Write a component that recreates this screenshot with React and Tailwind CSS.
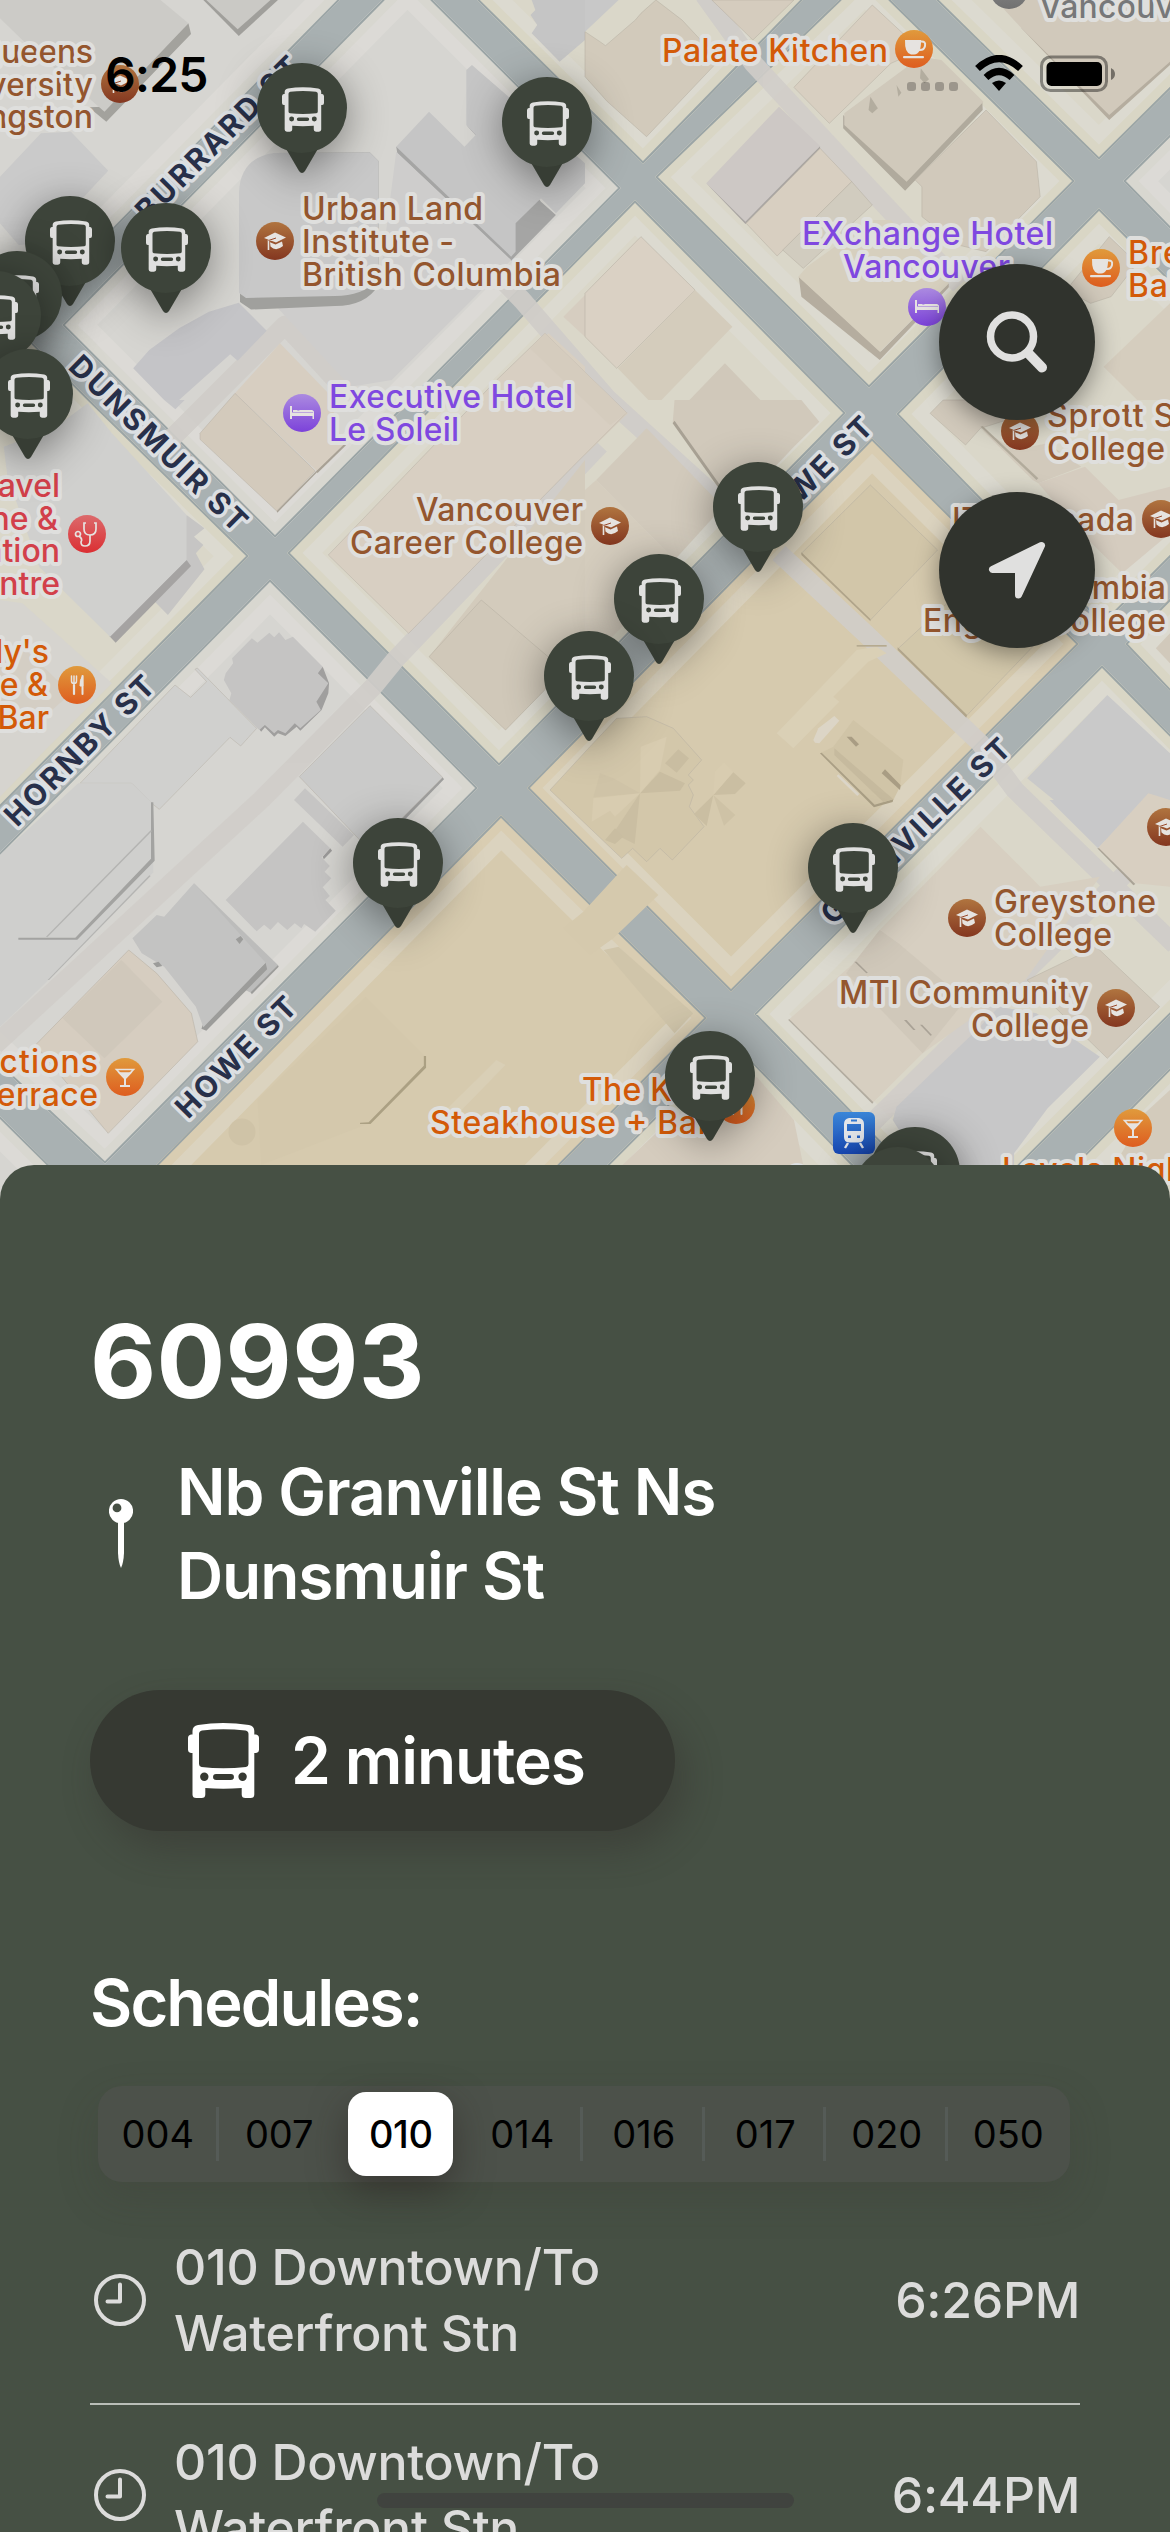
import React from "react";

const FONT = 'Inter, "Liberation Sans", sans-serif';

/* ---------- map data ---------- */

const GREY = { fill: "#d6d5d1", path: "#dcdad6", rim: "#d8d7d0" };
const CREAM = { fill: "#dad7c9", path: "#dcdad0", rim: "#d9d6c5" };
const TAN = { fill: "#d6caae", path: "#dbd3bf", rim: "#d9cdb2" };

const BLOCKS = [
  ["-60,-60 400,-60 340,0 0,345 -60,405", GREY],
  ["62,325 382,0 442,-60 373,-60 433,0 621,188 275,538", GREY],
  ["417,-60 477,0 643,164 803,0 863,-60", CREAM],
  ["655,177 839,0 865,-26 891,0 1075,181 869,388", CREAM],
  ["936,0 876,-60 1240,-60 1240,20 1099,160", CREAM],
  ["1123,181 1240,65 1240,300", GREY],
  ["287,553 635,200 846,413 499,766", CREAM],
  ["1099,208 1240,350 1240,487 1115,613 1091,613 896,414", CREAM],
  ["-60,250 90,400 249,556 -60,868", CREAM],
  ["270,579 478,788 105,1164 -60,1010 -60,913", GREY],
  ["527,788 872,438 1079,644 731,992", TAN],
  ["501,815 707,1018 500,1225 97,1225", TAN],
  ["754,1014 1102,665 1240,805 1240,945 960,1225", CREAM],
  ["1125,644 1240,528 1240,765", CREAM],
  ["-60,1057 110,1225 -60,1225", GREY],
  ["732,1040 912,1225 547,1225", CREAM],
  ["1240,997 1015,1225 1240,1225", CREAM],
];

const ALLEYS = [
  "455,232 522,300 607,398 716,497",
  "704,-5 753,63 868,187 960,285",
  "600,445 395,660 373,687 261,800 -5,1045",
  "165,445 285,325 345,390",
  "779,553 868,636 980,743 1015,790 1175,945",
  "1126,873 870,1125",
];

/* Footprints grouped by map tile; sx and sy convert tile units to pixels. */
const SX = 0.37309;
const SY = 0.33333;
const TILES = [
  {
    x: 0, y: 0, sx: SX, sy: SY,
    shapes: [
      ["505,70 512,102 285,365 238,322 280,320", "#a3a29d"],
      ["0,55 0,0 430,0 505,70 280,335 60,120", "#cccbc7"],
      ["545,0 640,108 745,0", "#a09f9b"],
      ["553,0 637,88 725,0", "#cac9c5"],
      ["0,530 110,400 190,395 290,512 150,680 130,730 50,735 0,670", "#cacaca"],
      ["1062,440 1065,460 1370,782 1490,645 1450,605 1440,590", "#a5a5a4"],
      ["1250,375 1280,412 1275,400", "#9c9c9b"],
      ["1062,440 1150,335 1245,440 1275,405 1250,375 1250,210 1265,195 1568,490 1568,550 1490,640 1450,595 1382,670 1382,755 1370,770", "#c5c5c5"],
      ["745,925 1015,870 1062,455 1370,780 1260,905 1050,1140 940,1160", "#cecdcc"],
      ["357,1105 400,1050 480,985 560,935 640,908 715,992 637,1082 617,1063 480,1200 440,1200", "#c4c4c7"],
      ["1425,0 1568,0 1568,120 1500,185 1425,100 1440,75 1422,45 1435,30", "#c5c5c5"],
      ["1470,1000 1568,1100 1568,1200 1290,1200", "#d8cfc1"],
      ["1510,950 1568,885 1568,1010", "#d6cdc0"],
    ],
  },
  {
    x: 585, y: 0, sx: SX, sy: SY,
    shapes: [
      ["0,95 40,125 55,137 135,60 150,40 190,0 260,60 360,180 165,410 65,310 60,305 0,230", "#d2cabb", 1],
      ["340,0 560,0 450,120", "#d5ccbe", 1],
      ["0,0 90,0 0,95", "#c8c8c8"],
      ["770,15 900,150 820,190 655,370 560,262", "#d8cfc1", 1],
      ["692,345 865,540 1065,305 1066,330 858,572 692,385", "#b0aa9d"],
      ["900,170 955,180 1068,305 862,545 695,375 695,340", "#d0c9bb"],
      ["765,290 785,325 770,340 760,330", "#b3ad9f"],
      ["835,255 848,278 840,290", "#b3ad9f"],
      ["900,205 922,238 910,250 898,235", "#b3ad9f"],
      ["1075,330 1210,485 1220,590 1075,755 1000,735 903,650 903,560 885,540", "#d1c9bb", 1],
      ["325,550 430,672 630,450 630,438 430,655", "#a9a5a2"],
      ["520,320 630,438 430,665 325,550", "#cdc8c5"],
      ["630,445 715,545 515,768 432,670", "#d8cfc1", 1],
      ["715,545 770,615 585,805 530,750", "#d1ccbf", 1],
      ["573,830 792,1055 975,850 975,862 790,1080 580,890", "#b5ad9f"],
      ["595,800 770,660 820,660 975,850 790,1055 572,830", "#d6cfbe"],
      ["1170,85 1405,360 1568,195 1568,180 1410,330 1180,70", "#b5ad9f"],
      ["1100,0 1568,0 1568,185 1405,345 1170,85", "#d1c9bb"],
      ["150,710 295,870 85,1105 0,1010 0,880", "#dad1c4", 1],
      ["295,870 395,980 205,1200 170,1200 88,1105", "#d4ccbc"],
      ["375,1090 470,1200 280,1200", "#d0c8ba"],
      ["1290,870 1405,710 1480,790 1410,890 1355,910", "#d1c9bb", 1],
      ["1390,1100 1568,910 1568,1200 1480,1200", "#d5cdbe"],
    ],
  },
  {
    x: 0, y: 400, sx: SX, sy: SY,
    shapes: [
      ["440,0 495,0 470,28", "#c6c6c8"],
      ["1568,180 1568,780 1460,870 1355,990 1150,770", "#d3cbbc"],
      ["1150,770 1290,600 1490,790 1460,870 1355,990", "#d0c8b9", 1],
      ["500,345 548,385 520,410 545,435 525,460 548,508 450,645 415,605", "#c6c5c4"],
      ["500,480 512,498 310,728 293,708", "#a5a3a2"],
      ["10,140 150,80 235,10 300,100 500,345 500,480 295,710 105,500 20,230", "#d0d0ce"],
      ["0,600 60,610 300,850 130,1040 0,1190", "#d6d4cf"],
      ["0,790 60,740 190,880 110,960 0,1000", "#d4cec4"],
      ["865,800 882,850 880,880 862,930 805,992 795,980 765,1008 745,1000 735,1010 710,982 700,995 690,980", "#a09f9e"],
      ["605,820 625,790 622,775 675,715 690,728 722,698 735,712 748,697 765,720 785,710 865,800 852,820 880,850 848,905 860,930 805,985 790,970 765,1000 745,990 735,1000 710,975 695,990 615,900 620,880 600,840", "#c5c4c3"],
    ],
  },
  {
    x: 585, y: 400, sx: SX, sy: SY,
    shapes: [
      ["0,0 115,40 0,165", "#d6cdbf"],
      ["235,70 240,0 580,0 628,65 560,140 400,330", "#d1c9bb"],
      ["235,70 400,330 404,322 240,62", "#a8a194"],
      ["30,240 165,85 370,320 240,480", "#d2cabc"],
      ["0,270 30,240 240,480 100,680 0,790", "#d5cdbe"],
      ["765,255 945,450 765,660 580,460", "#d2c6a9", 1],
      ["580,457 765,657 765,664 580,465", "#b0a48a"],
      ["840,745 980,600 1200,740 1022,948", "#d2c7aa", 1],
      ["838,742 1024,945 1022,953 838,750", "#b0a48a"],
      ["1185,1135 1400,885 1568,1060 1568,1320 1400,1330", "#c9c9c9"],
      ["925,40 960,0 1130,0 1130,60 1060,85 1020,135", "#d1c9bb", 1],
      ["1060,85 1150,150 1240,130 1330,200 1215,250 1200,240", "#d2cabc"],
      ["1215,250 1340,200 1430,300 1568,260 1568,400 1440,520 1330,400", "#d5ccbf"],
      ["1060,80 1066,78 1215,235 1210,240", "#b2ab9c"],
      ["1530,745 1568,700 1568,790", "#d1c9bb"],
    ],
  },
  {
    x: 0, y: 800, sx: SX, sy: SY,
    shapes: [
      ["885,145 865,170 868,178 890,152", "#9b9a99"],
      ["605,300 812,65 885,145 862,172 884,198 870,215 888,235 865,262 884,288 872,300 900,332 845,395 815,372 808,385 790,370 770,390 745,366 725,390 708,374 688,394", "#c5c4c3"],
      ["520,250 745,495 675,580 640,560", "#bcbcbb"],
      ["745,495 747,500 675,583 672,577", "#9c9c9a"],
      ["712,488 716,508 553,692 540,686 545,670", "#9c9c9a"],
      ["355,415 420,345 440,350 520,250 712,488 545,682 525,620 440,500 380,460", "#c3c3c2"],
      ["632,418 645,408 652,418 642,432", "#9c9c9a"],
      ["410,490 425,485 435,498 420,502", "#9c9c9a"],
      ["95,735 165,655 345,450 420,520 513,640 530,725 290,1000", "#d6cdc0", 1],
      ["325,480 435,605 280,775 168,655", "#d0c8bb"],
      ["980,590 1140,770 1140,800 990,970 700,1095 690,900", "#d4c8ac"],
      ["1136,768 1142,768 1142,803 993,972 965,972 965,968 988,967 1136,797", "#aba083"],
      ["1200,925 1330,780 1355,795 1220,950", "#d9cfb6"],
    ],
  },
  {
    x: 585, y: 800, sx: SX, sy: SY,
    shapes: [
      ["50,450 90,440 290,640 240,700", "#d0c5aa"],
      ["545,660 720,490 790,390 1060,80 1220,260 1380,230 1180,540 905,760 770,910", "#d7cfc1"],
      ["545,660 547,657 773,907 770,911", "#b2aca0"],
      ["790,390 720,490 700,520 905,760 1020,600 840,430", "#d0c8ba"],
      ["722,485 728,485 758,518 754,520", "#a9a296"],
      ["855,660 862,660 886,690 880,690", "#a9a296"],
      ["898,674 904,674 930,705 926,707", "#a9a296"],
      ["825,960 835,920 1050,690 1110,620 1210,640 1380,770 1240,925 1150,1060 1150,1095 900,1095", "#c7c7c8"],
      ["1245,0 1500,0 1375,145", "#c8c8c9"],
      ["1375,145 1510,-20 1568,0 1568,260 1475,250", "#d8cfc1"],
      ["1373,145 1378,145 1475,252 1470,256", "#aaa396"],
      ["1185,540 1370,440 1540,620 1400,775", "#d1c9bb", 1],
      ["190,1000 460,830 560,960 585,1095 100,1095", "#d5ccbe"],
      ["1500,940 1568,870 1568,1095 1420,1095", "#d3cbbc"],
    ],
  },
  {
    x: 0, y: 640, sx: SY, sy: SY,
    shapes: [
      ["525,135 572,172 620,125 585,88 592,84 770,265 722,318 690,292 478,508 455,490 395,430 240,430", "#d0d0ce", 1],
      ["235,430 395,430 457,490 460,697 145,1020 55,1108 0,1160 0,645", "#cfcfcd"],
      ["453,487 460,487 464,662 232,899 55,899 55,893 226,893 453,656", "#a3a3a1"],
      ["452,571 456,573 142,892 138,890", "#b4b4b2"],
      ["448,706 452,708 147,1020 143,1020", "#b4b4b2"],
      ["1328,412 1332,418 1120,636 1110,628", "#9e9e9d"],
      ["898,410 1110,197 1328,412 1110,632", "#cacac9", 1],
      ["915,445 1062,585 1028,620 882,480", "#c6c5c4"],
    ],
  },
  {
    x: 500, y: 640, sx: SY, sy: SY,
    shapes: [
      ["190,865 250,815 345,712 380,675 475,765 340,895 270,945", "#d5c9ad"],
      ["150,450 270,320 350,235 440,230 520,265 605,360 565,405 580,420 565,435 580,465 568,500 612,560 517,660 480,625 440,665 398,625 365,655 215,512", "#d3c7aa", 1],
      ["420,460 480,395 555,430 540,452", "#c9bda1"],
      ["420,460 404,612 340,580", "#cabea2"],
      ["420,460 280,472 300,400 340,415", "#cfc3a7"],
      ["420,460 422,320 500,290 480,390", "#d8ccb0"],
      ["420,460 280,475 275,545 330,512 345,530", "#d8ccb0"],
      ["495,370 535,328 567,355 530,398", "#c9bda1"],
      ["315,600 345,565 370,590 345,612", "#c9bda1"],
      ["640,465 700,397 737,430 705,462", "#cabea2"],
      ["640,465 582,522 620,558", "#cabea2"],
      ["640,465 672,557 706,525", "#cec2a6"],
      ["640,465 645,395 672,367 700,395", "#d8ccb0"],
      ["1070,30 1130,20 1160,40 1105,65 1000,170 1018,185 880,325 830,280", "#dad0b6"],
      ["1070,15 1160,15 1160,20 1070,20", "#b5aa8f"],
      ["940,300 955,265 1003,228 1018,242 958,310 945,308", "#dcd5c6"],
      ["960,340 1000,320 1060,240 1210,360 1200,440 1180,480 1150,488 1120,500", "#d0c4a7"],
      ["960,340 965,338 1124,494 1180,478 1178,486 1122,502", "#aa9f85"],
      ["1003,325 1180,478 1150,486 1003,345", "#c6ba9e"],
      ["1040,290 1055,290 1077,313 1068,320", "#a99d84"],
      ["1145,400 1155,388 1202,436 1200,450", "#a99d84"],
      ["1015,403 1078,462 1072,468 1010,408", "#dbd5c8"],
    ],
  },
  {
    x: 200, y: 250, sx: SY, sy: SY,
    shapes: [
      ["350,660 430,580 438,586 352,670", "#a8a195"],
      ["240,280 385,430 430,585 350,662 105,430", "#d7cec1"],
      ["230,783 350,662 354,664 232,788", "#a8a195"],
      ["0,550 105,430 346,663 230,783 0,568", "#d3cabc", 1],
      ["1035,250 1280,488 1130,638 626,1150 385,915 890,390", "#d8cfc2", 1],
      ["1035,250 1280,488 1230,525 990,295", "#d5ccbe"],
    ],
  },
];

const STREETS = [
  ["BURRARD ST", 148, 223, -45, 218],
  ["DUNSMUIR ST", 67, 368, 44.6, 236],
  ["HORNBY ST", 17, 828, -45, 198],
  ["HOWE ST", 188, 1120, -45, 157],
  ["HOWE ST", 764, 540, -45, 157],
  ["GRANVILLE ST", 833, 926, -44.2, 251],
];

const BROWN = "#94562e";
const ORANGE = "#d35a08";
const PURPLE = "#7f48e0";
const RED = "#d2404a";

/* text, x, baseline, colour, anchor, width */
const LABELS = [
  ["Queens", 93, 63, BROWN, "end", 116],
  ["University", 93, 96, BROWN, "end", 156],
  ["Kingston", 93, 128, BROWN, "end", 135],
  ["Palate Kitchen", 662, 61.5, ORANGE, "start", 226],
  ["Vancouver", 1039, 18, "#777879", "start", 166],
  ["Urban Land", 302, 220, BROWN, "start", 181],
  ["Institute -", 302, 253, BROWN, "start", 152],
  ["British Columbia", 302, 286, BROWN, "start", 259],
  ["EXchange Hotel", 802, 245, PURPLE, "start", 251],
  ["Vancouver", 843, 278, PURPLE, "start", 167],
  ["Breka", 1128, 264, ORANGE, "start", 92],
  ["Bakery", 1128, 297, ORANGE, "start", 110],
  ["Executive Hotel", 329, 408, PURPLE, "start", 244],
  ["Le Soleil", 329, 441, PURPLE, "start", 130],
  ["Sprott Shaw", 1047, 427, BROWN, "start", 194],
  ["College", 1047, 459.5, BROWN, "start", 118],
  ["Travel", 60, 497, RED, "end"],
  ["Medicine &", 58, 529.5, RED, "end"],
  ["Vaccination", 60, 562, RED, "end"],
  ["Centre", 60, 595, RED, "end"],
  ["Vancouver", 416, 521, BROWN, "start", 167],
  ["Career College", 350, 554, BROWN, "start", 233],
  ["ITD Canada", 952, 531, BROWN, "start", 182],
  ["Columbia", 1166, 599, BROWN, "end", 144],
  ["English College", 923, 632, BROWN, "start", 243],
  ["Cody's", 49, 663, ORANGE, "end"],
  ["Lounge &", 48, 696, ORANGE, "end"],
  ["Bar", 49, 729, ORANGE, "end"],
  ["Greystone", 994, 913, BROWN, "start", 162],
  ["College", 994, 946, BROWN, "start", 118],
  ["MTI Community", 839, 1004, BROWN, "start", 250],
  ["College", 971, 1037, BROWN, "start", 118],
  ["Reflections", 98, 1073, ORANGE, "end", 182],
  ["Terrace", 98, 1106, ORANGE, "end", 120],
  ["The Keg", 582, 1101, ORANGE, "start", 128],
  ["Steakhouse + Bar", 430, 1134, ORANGE, "start", 280],
  ["Levels Nightclub", 1002, 1181, ORANGE, "start", 262],
];

const BADGES = [
  [120, 84, "cap"], [914, 49, "cup"], [1009, -10, "none"], [275, 241, "cap"],
  [927, 307, "bed"], [1101, 268, "cup"], [302, 413, "bed"], [1020, 431, "cap"],
  [610, 526, "cap"], [1161, 519, "cap"], [87, 534, "steth"], [77, 685, "fork"],
  [1166, 827, "cap"], [967, 918, "cap"], [1116, 1008, "cap"], [125, 1077, "glass"],
  [736, 1105, "fork"], [1133, 1128, "glass"],
];

const BADGE_FILL = { cap: "brownG", cup: "orangeG", fork: "orangeG", glass: "orangeG", bed: "purpleG", steth: "redG", none: "greyG" };

const PINS = [
  [302, 108], [547, 122], [70, 241], [166, 248], [16.5, 296], [-4.5, 316], [28, 394],
  [758, 507], [659, 599], [589, 676], [398, 863], [853, 868], [710, 1076], [915, 1172], [898, 1192],
];

/* ---------- icons ---------- */

function Bus({ className }) {
  return (
    <svg viewBox="0 0 71 75" className={className} fill="currentColor" fillRule="evenodd">
      <path d="M4.500 8Q4.500 3 10 2Q35 -2 61 2Q66.300 3 66.300 8V11.500H68Q71 12 71 15V26.500Q71 29.500 68 30H66.300V71.500Q66.300 75 62.500 75H57.500Q53.700 75 53.700 71.500V65Q35 66.500 17.300 65V71.500Q17.300 75 13.500 75H8.300Q4.500 75 4.500 71.500V30H3Q0 29.500 0 26.500V15Q0 12 3 11.500H4.500ZM14 7.500Q35 5 57.500 7.500Q60.500 8 60.500 11V41Q60.500 43.500 58 44Q35 46.500 13.500 44Q11 43.500 11 41V11Q11 8 14 7.500ZM16.300 49.500A4.200 4.200 0 1 0 16.300 57.900A4.200 4.200 0 1 0 16.300 49.500ZM54.600 49.500A4.200 4.200 0 1 0 54.600 57.900A4.200 4.200 0 1 0 54.600 49.500ZM28 51H43A2.900 2.900 0 0 1 43 56.900H28A2.900 2.900 0 0 1 28 51Z" />
    </svg>
  );
}

function Glyph({ kind }) {
  const c = "#e6e3e0";
  if (kind === "cap")
    return (
      <g fill={c}>
        <path d="M0 -8.500L11 -3.500L1 1.500L-11 -3Z" />
        <path d="M-5 1.200L0.500 3.500L7 0.500L8 5Q1 11 -4.500 5.500Z" />
        <path d="M1 -3L-6.500 -0.500V9" fill="none" stroke={c} strokeWidth="1.600" />
        <path d="M1 -3L-6.500 -0.500" fill="none" stroke="#99492a" strokeWidth="1" />
      </g>
    );
  if (kind === "cup")
    return (
      <g fill={c}>
        <path d="M-9 -9H7Q7.500 5 0 5.500H-3Q-9.500 4 -9 -9Z" />
        <path d="M7 -7.500Q12 -8 11 -3Q10 1.500 5 1" fill="none" stroke={c} strokeWidth="2" />
        <rect x="-11" y="7" width="21" height="2.200" rx="1" />
      </g>
    );
  if (kind === "bed")
    return (
      <g fill={c}>
        <rect x="-12" y="-7" width="2" height="13" />
        <path d="M-9 -2.500H11Q12 -2 12 0V6H10.500V3H-10V-0.500H11V-1H-9Z" />
        <path d="M-9 -3L-5 -3L-4 -1.500L-2 -3H10L12 -1H-9Z" />
      </g>
    );
  if (kind === "fork")
    return (
      <g stroke={c} strokeLinecap="round" fill={c}>
        <path d="M-5.500 -9V-4Q-5.500 -1.500 -3 -1.500Q-0.500 -1.500 -0.500 -4V-9M-3 -9V-2" fill="none" strokeWidth="1.500" />
        <path d="M-3 0V9" strokeWidth="2.200" />
        <path d="M5.500 -9V9" strokeWidth="2" />
        <path d="M5.500 -9Q2.500 -5 3 1H5.500Z" strokeWidth="1" />
      </g>
    );
  if (kind === "glass")
    return (
      <g stroke={c} fill="none" strokeWidth="1.600">
        <path d="M-8.500 -7.500H8.500L0 1.500Z" />
        <path d="M-5.500 -4H5.500L0 1.500Z" fill={c} />
        <path d="M0 1V9M-5 9H5" strokeWidth="2" />
      </g>
    );
  if (kind === "steth")
    return (
      <g stroke={c} fill="none" strokeWidth="1.700">
        <path d="M-1 -11H-3V-5Q-3 1 3 1Q9 1 9 -5V-11H7" />
        <path d="M3 1V7Q3 12 -2 12Q-6 12 -6 8Q-4 5 -8 2" />
        <circle cx="-9" cy="0" r="2.500" />
      </g>
    );
  return null;
}

function Grad({ id, a, b }) {
  return (
    <linearGradient id={id} x1="0" y1="0" x2="0" y2="1">
      <stop offset="0" stopColor={a} />
      <stop offset="1" stopColor={b} />
    </linearGradient>
  );
}

function MapCanvas() {
  return (
    <svg className="block h-[1226px] w-[1170px]" viewBox="0 0 1170 1226" style={{ fontFamily: FONT }}>
      <defs>
        <Grad id="brownG" a="#b0743f" b="#843720" />
        <Grad id="orangeG" a="#e09a3c" b="#de5d1f" />
        <Grad id="purpleG" a="#ab8ae0" b="#7c42da" />
        <Grad id="redG" a="#dc6a6c" b="#db2f33" />
        <Grad id="greyG" a="#909090" b="#707070" />
        <Grad id="blueG" a="#3b86d8" b="#1747b4" />
        {BLOCKS.map((b, i) => (
          <clipPath key={i} id={`block-${i}`}>
            <polygon points={b[0]} />
          </clipPath>
        ))}
      </defs>
      <rect width="1170" height="1226" fill="#a9b1b2" />
      {BLOCKS.map(([pts, c], i) => (
        <g key={i} clipPath={`url(#block-${i})`} strokeLinejoin="round">
          <polygon points={pts} fill={c.fill} stroke={c.path} strokeWidth="50" />
          <polygon points={pts} fill="none" stroke={c.rim} strokeWidth="22" />
          <polygon points={pts} fill="none" stroke="#9ba5a6" strokeWidth="4" />
        </g>
      ))}
      <g fill="none" stroke="#d0cdc9" strokeWidth="19" strokeLinejoin="round" opacity="0.9">
        {ALLEYS.map((a) => (
          <polyline key={a} points={a} />
        ))}
      </g>
      {TILES.map((t) => (
        <g key={`${t.x}-${t.y}`} transform={`translate(${t.x} ${t.y}) scale(${t.sx} ${t.sy})`}>
          {t.shapes.map(([pts, fill, edge], i) => (
            <polygon key={i} points={pts} fill={fill} stroke={edge ? "#b2aca0" : "none"} strokeWidth={edge ? 1.8 : 0} strokeOpacity="0.75" />
          ))}
        </g>
      ))}
      <path d="M274 153L370 152.500L378.500 161V285Q366 306 335 306L251 309.500L240 302V293L246 297Z" fill="#a0a09d" />
      <path d="M274 153L370 152.500L378.500 161V280Q362 296 335 296L246 298L239 293V193Q240 158 274 153Z" fill="#c8c8c8" />
      <circle cx="242" cy="1132" r="13.500" fill="#cfc3a7" />

      {STREETS.map(([t, x, y, r, w], i) => (
        <text key={i} transform={`translate(${x} ${y}) rotate(${r})`} textLength={w} fontSize="30" fontWeight="700" fill="#28304a" stroke="#dcdfe2" strokeWidth="7" strokeLinejoin="round" paintOrder="stroke">
          {t}
        </text>
      ))}
      {BADGES.map(([x, y, k], i) => (
        <g key={i} transform={`translate(${x} ${y})`}>
          <circle r="19" fill={`url(#${BADGE_FILL[k]})`} />
          <Glyph kind={k} />
        </g>
      ))}
      {LABELS.map(([t, x, y, c, anchor, w], i) => (
        <text key={i} x={x} y={y} textAnchor={anchor} textLength={w} fontSize="32" fontWeight="550" fill={c} stroke="#dfdfdd" strokeWidth="8" strokeLinejoin="round" paintOrder="stroke">
          {t}
        </text>
      ))}
      <g transform="translate(833 1112)">
        <rect width="42" height="42" rx="6" fill="url(#blueG)" />
        <path fillRule="evenodd" fill="#e4e6ea" d="M16 6H26Q31 7 31 12V25Q31 30 26 30.500H16Q11 30 11 25V12Q11 7 16 6ZM18 7.500H24V9.500H18ZM14 12H28V19H14ZM15 23.500H18V26H15ZM24 23.500H27V26H24Z" />
        <path d="M15 31L12 36M27 31L30 36" stroke="#e4e6ea" strokeWidth="2.400" />
      </g>
      <circle cx="797" cy="1176" r="13" fill="#dcdfe2" />
      <circle cx="797" cy="1176" r="9" fill="#8fa4cf" />
    </svg>
  );
}

function Pin({ x, y }) {
  return (
    <div className="absolute h-[110px] w-[90px] drop-shadow-[0_8px_20px_rgba(0,0,0,0.42)]" style={{ left: x - 45, top: y - 45 }}>
      <svg viewBox="0 0 90 110" className="absolute inset-0 h-full w-full">
        <path d="M28 84H62L48 108Q45 112 42 108Z" fill="#373d34" />
        <circle cx="45" cy="45" r="45" fill="#3d443a" />
      </svg>
      <Bus className="absolute left-[25px] top-[24px] h-[45px] w-[42px] text-[#e0e0df]" />
    </div>
  );
}

function RoundButton({ children }) {
  return (
    <button className="flex size-[156px] items-center justify-center rounded-full bg-[#30332d] shadow-[0_6px_24px_rgba(0,0,0,0.4)]">
      {children}
    </button>
  );
}

function StatusBar() {
  return (
    <div className="absolute inset-x-0 top-0 flex h-[141px] items-start justify-between pl-[105px] pr-[54px] text-black">
      <div className="pt-[47px] text-[48px] font-semibold leading-[56px] tracking-[-0.9px]">6:25</div>
      <div className="flex pt-[55px]">
        <div className="mr-[17px] mt-[27px] flex gap-[5px]">
          {[0, 1, 2, 3].map((i) => (
            <span key={i} className="size-[9px] rounded-[3px] bg-black/25" />
          ))}
        </div>
        <svg viewBox="0 0 48 36" className="h-[36px] w-[48px]">
          <g fill="none" stroke="#000" strokeWidth="7">
            <path d="M2.500 13.500Q24 -6.500 45.500 13.500" />
            <path d="M11 22.500Q24 10.500 37 22.500" />
          </g>
          <path d="M17 28Q24 23 31 28L24 36Z" />
        </svg>
        <svg viewBox="0 0 76 38" className="ml-[17px] h-[38px] w-[76px]">
          <rect x="1.500" y="2" width="65" height="33.500" rx="9" fill="none" stroke="#000" strokeOpacity="0.4" strokeWidth="3" />
          <rect x="6.500" y="7" width="55.500" height="24" rx="5" />
          <path d="M71 13Q75 15 75 19Q75 23 71 25Z" fillOpacity="0.45" />
        </svg>
      </div>
    </div>
  );
}

const ROUTES = ["004", "007", "010", "014", "016", "017", "020", "050"];
const SELECTED = 2;

function Segments() {
  return (
    <div className="ml-[8px] grid h-[96px] w-[972px] grid-cols-8 rounded-[24px] bg-[#4c514a] shadow-[0_16px_40px_rgba(60,55,50,0.22)]">
      {ROUTES.map((r, i) => (
        <div key={r} className="relative flex items-center justify-center pr-[2px]">
          {i === SELECTED ? (
            <span className="flex h-[84px] w-[105px] items-center justify-center rounded-[18px] bg-white text-[38px] font-medium tracking-[-0.4px] text-black shadow-[0_14px_36px_rgba(40,32,30,0.5)]">{r}</span>
          ) : (
            <span className="text-[38px] text-black">{r}</span>
          )}
          {i !== SELECTED && i !== SELECTED - 1 && i < ROUTES.length - 1 && (
            <span className="absolute right-px top-[21px] h-[54px] w-[3px] bg-[#555b57]" />
          )}
        </div>
      ))}
    </div>
  );
}

function Departure({ time }) {
  return (
    <div className="flex h-[193px] items-center text-[50px] font-[550] leading-[66px] text-[#dcdcdb]">
      <svg viewBox="0 0 52 52" className="ml-[4px] size-[52px] shrink-0" fill="none" stroke="currentColor" strokeWidth="4" strokeLinecap="round">
        <circle cx="26" cy="26" r="24" />
        <path d="M26 10.500V27.500H13.500" strokeLinejoin="round" />
      </svg>
      <div className="ml-[28px] w-[460px] whitespace-nowrap tracking-[-0.3px]">
        010 Downtown/To
        <br />
        Waterfront Stn
      </div>
      <div className="ml-auto whitespace-nowrap tracking-[-0.3px]">{time}</div>
    </div>
  );
}

export default function App() {
  return (
    <div className="relative h-[2532px] w-[1170px] overflow-hidden bg-[#465044]" style={{ fontFamily: FONT }}>
      <div className="relative h-[1226px] overflow-hidden">
        <MapCanvas />
        {PINS.map(([x, y]) => (
          <Pin key={`${x},${y}`} x={x} y={y} />
        ))}
        <div className="absolute left-[939px] top-[264px] flex flex-col gap-[72px]">
          <RoundButton>
            <svg viewBox="0 0 64 64" className="size-[64px]" fill="none" stroke="#e0e0df" strokeLinecap="round">
              <circle cx="27" cy="26.500" r="21.500" strokeWidth="7.500" />
              <path d="M43 43L57 57.500" strokeWidth="10" />
            </svg>
          </RoundButton>
          <RoundButton>
            <svg viewBox="0 0 64 64" className="size-[64px]" fill="#e0e0df" stroke="#e0e0df" strokeWidth="7" strokeLinejoin="round">
              <path d="M56.500 7.500L7.500 31.500H33.500V57Z" />
            </svg>
          </RoundButton>
        </div>
      </div>

      <div className="relative -mt-[61px] h-[1367px] overflow-hidden rounded-t-[34px] bg-[#465044] px-[90px] pt-[136px] text-white">
        <h1 className="text-[102px] font-bold leading-[120px] tracking-[0.3px]">60993</h1>
        <div className="mt-[29px] flex items-center">
          <svg viewBox="0 0 24 70" className="ml-[19px] h-[70px] w-[24px]" fill="currentColor" fillRule="evenodd">
            <path d="M12 0A12 12 0 1 0 12 24.200A12 12 0 1 0 12 0ZM8 4.500A4.400 4.400 0 1 1 8 13.300A4.400 4.400 0 1 1 8 4.500Z" />
            <path d="M9 22H15V54Q14.500 64 12 69Q9.500 64 9 54Z" />
          </svg>
          <p className="ml-[44px] whitespace-nowrap text-[64px] font-semibold leading-[84px] tracking-[-1.1px]">
            Nb Granville St Ns
            <br />
            Dunsmuir St
          </p>
        </div>
        <div className="mt-[72px] flex h-[141px] w-[585px] items-center rounded-full bg-[#363932] pl-[98px] shadow-[10px_18px_36px_rgba(50,45,42,0.4)]">
          <Bus className="h-[75px] w-[71px] text-white" />
          <span className="ml-[32px] whitespace-nowrap text-[64px] font-semibold tracking-[-1.1px]">2 minutes</span>
        </div>
        <h2 className="mt-[130px] text-[65px] font-semibold leading-[84px] tracking-[-1.9px]">Schedules:</h2>
        <div className="mt-[41px]">
          <Segments />
        </div>
        <div className="mt-[21px] flex flex-col">
          <Departure time="6:26PM" />
          <div className="mt-[7px] h-[2px] bg-[#b9beb8]" />
          <div className="-mt-[7px]">
            <Departure time="6:44PM" />
          </div>
        </div>
      </div>

      <div className="absolute left-[377px] top-[2493px] h-[15px] w-[417px] rounded-full bg-[#40433f]" />
      <StatusBar />
    </div>
  );
}
